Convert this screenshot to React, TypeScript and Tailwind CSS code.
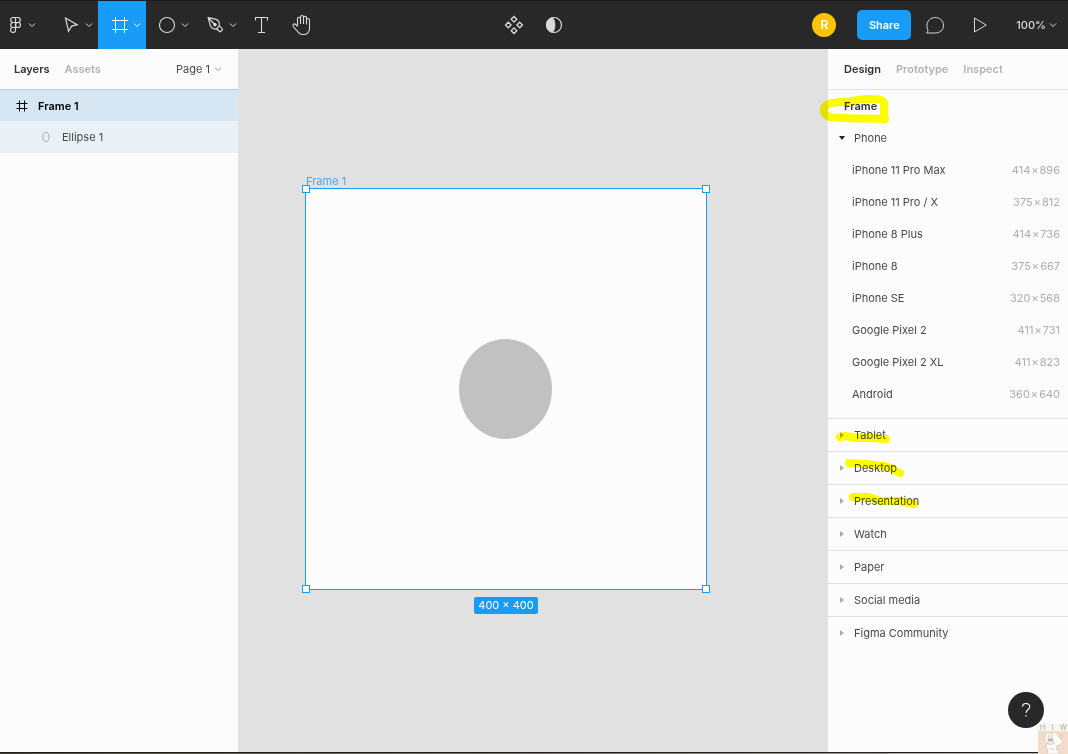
import React from "react";

type IconProps = { children: React.ReactNode; size?: string; box?: string };

function Icon({ children, size = "size-[18px]", box = "0 0 18 18" }: IconProps) {
  return (
    <svg viewBox={box} className={`${size} shrink-0`} fill="none" stroke="currentColor" aria-hidden="true">
      {children}
    </svg>
  );
}

function Chevron() {
  return (
    <Icon size="size-2" box="0 0 8 8">
      <path d="M1 2.5 4 5.5 7 2.5" />
    </Icon>
  );
}

function Tool({ label, active, first, children }: { label: string; active?: boolean; first?: boolean; children: React.ReactNode }) {
  return (
    <button
      aria-label={label}
      className={`flex h-full items-center gap-1 ${first ? "w-[50px] pl-[6px]" : "w-12 pl-[13px]"} ${active ? "bg-[#189cf8] text-white" : "text-[#d9d9d9]"}`}
    >
      {children}
      <Chevron />
    </button>
  );
}

function Toolbar() {
  return (
    <header className="flex h-[49px] shrink-0 border-t border-[#1c1c1c] bg-[#282828] text-[#d9d9d9]">
      <div className="flex flex-1">
        <Tool label="Main menu" first>
          <Icon>
            <path d="M9.5 1.5h-2.3a2.5 2.5 0 0 0 0 5h2.3zM9.5 1.5h2.3a2.5 2.5 0 0 1 0 5H9.5zM9.5 6.5H7.2a2.5 2.5 0 0 0 0 5h2.3zM9.5 11.5H7.2a2.5 2.5 0 1 0 2.3 2.5z" strokeWidth="1.2" />
            <circle cx="12" cy="9" r="2.5" strokeWidth="1.2" />
          </Icon>
        </Tool>
        <Tool label="Move">
          <Icon>
            <path d="M2.500 2 14.200 8.700 8.700 10.100 5.500 15.200z" strokeWidth="1.2" />
          </Icon>
        </Tool>
        <Tool label="Frame" active>
          <Icon>
            <path d="M4.5 1v16M13.5 1v16M1 4.5h16M1 13.5h16" />
          </Icon>
        </Tool>
        <Tool label="Shape">
          <Icon>
            <circle cx="8" cy="9" r="7.5" strokeWidth="1.1" />
          </Icon>
        </Tool>
        <Tool label="Pen">
          <Icon>
            <path d="M1.2 1.7 8.5 3.1c2.6.9 4.3 3.5 3.8 6.7L9.4 13C6.300 13.400 3.900 11.600 3.100 8.900zM1.500 2 7.300 8M12.300 9.800l2.800 2.800c.500.500.500 1 0 1.500l-1.200 1.200c-.500.500-1.100.500-1.600 0L9.500 12.800" strokeWidth="1.2" />
            <circle cx="8" cy="8.700" r="1.300" fill="currentColor" />
          </Icon>
        </Tool>
        <button aria-label="Text" className="flex h-full w-10 items-center justify-center">
          <Icon>
            <path d="M2.500 4.500v-3h12v3M8.500 1.500v15M5 16.500h7" strokeWidth="1.1" />
          </Icon>
        </button>
        <button aria-label="Hand" className="flex h-full w-10 items-center justify-center">
          <Icon size="size-[22px]" box="0 0 22 22">
            <path d="M6.500 12V4.800a1.500 1.500 0 0 1 3 0V10M9.500 10V3a1.500 1.500 0 0 1 3 0v7M12.500 10V3.800a1.500 1.500 0 0 1 3 0V10.500M15.500 10.500V6a1.500 1.500 0 0 1 3 0v8.500c0 3.500-2.500 6-5.700 6h-1c-2 0-3.500-.800-4.700-2.400L2.300 12.500c-.600-.900-.400-1.800.300-2.300s1.600-.300 2.200.400L6.500 12.500" strokeWidth="1.1" />
          </Icon>
        </button>
      </div>
      <div className="flex">
        <button aria-label="Create component" className="flex h-full w-10 items-center justify-center">
          <Icon size="size-5" box="0 0 20 20">
            <path d="M10 1.500 12.800 4.300 10 7.100 7.200 4.300zM10 12.900l2.800 2.800L10 18.500l-2.800-2.800zM4.300 7.200 7.100 10l-2.800 2.800L1.500 10zM15.700 7.200l2.800 2.800-2.800 2.800L12.900 10z" strokeWidth="1.300" />
          </Icon>
        </button>
        <button aria-label="Use as mask" className="flex h-full w-10 items-center justify-center">
          <Icon>
            <circle cx="9" cy="9" r="7.500" strokeWidth="1.200" />
            <path d="M7.500 1.700C10.600 5 10.600 13 7.500 16.300 4 15.500 1.500 12.600 1.500 9s2.500-6.500 6-7.300z" fill="currentColor" />
          </Icon>
        </button>
      </div>
      <div className="flex flex-1 items-center justify-end">
        <span className="mr-[21px] flex size-6 items-center justify-center rounded-full bg-[#ffc400] text-[12px] font-semibold text-white">R</span>
        <button className="h-[30px] w-[54px] rounded-[5px] bg-[#189cf8] text-[11px] font-semibold text-white">Share</button>
        <button aria-label="Comments" className="ml-[14px] flex">
          <Icon size="size-5" box="0 0 20 20">
            <path d="M1.500 18c1-.900 1.500-2 1.300-3.200A7.800 7.800 0 0 1 2 10.500C2 5.700 5.700 2.500 10.200 2.500s8.300 3.200 8.300 7.900-3.700 7.600-8.300 7.600z" />
          </Icon>
        </button>
        <button aria-label="Present" className="ml-[27px] flex">
          <Icon>
            <path d="M2.500 2v14L14.200 9z" />
          </Icon>
        </button>
        <button className="ml-[26px] flex items-center gap-[3px] pr-[11px] text-[11px] font-medium">
          100%
          <Chevron />
        </button>
      </div>
    </header>
  );
}

function LayersPanel() {
  return (
    <aside className="w-[238px] shrink-0 bg-[#fcfcfc]">
      <div className="flex h-10 items-center gap-[15px] px-[14px] font-semibold">
        <button className="text-[#333]">Layers</button>
        <button className="text-[#b3b3b3]">Assets</button>
        <button className="ml-auto flex items-center gap-1 pr-[2px] font-normal">
          Page 1
          <span className="flex text-[#999]"><Chevron /></span>
        </button>
      </div>
      <ul>
        <li className="flex h-8 items-center gap-[10px] border-t border-[#b9ccda] bg-[#d6e6f2] pl-4 font-semibold text-black">
          <Icon size="size-3" box="0 0 12 12">
            <path d="M3.500.500v11M8.500.500v11M.500 3.500h11M.500 8.500h11" />
          </Icon>
          Frame 1
        </li>
        <li className="flex h-8 items-center gap-[10px] bg-[#e9f0f6] pl-10">
          <span className="flex text-[#a8b0b6]">
            <Icon size="size-3" box="0 0 12 12">
              <ellipse cx="6" cy="6" rx="3" ry="4.500" />
            </Icon>
          </span>
          Ellipse 1
        </li>
      </ul>
    </aside>
  );
}

function Canvas() {
  const handle = "absolute size-2 border border-[#189cf8] bg-white";
  return (
    <main className="relative min-w-0 flex-1 overflow-hidden bg-[#e1e1e1]">
      <div className="absolute top-[139px] left-[67px] flex size-[402px] items-center justify-center border border-[#189cf8] bg-[#fcfcfc]">
        <span className="absolute bottom-full left-0 leading-4 text-[#45a8ef]">Frame 1</span>
        <div className="mr-px h-[100px] w-[93px] rounded-[50%] bg-[#c1c1c1]" />
        <i className={`${handle} -top-1 -left-1`} />
        <i className={`${handle} -top-1 -right-1`} />
        <i className={`${handle} -bottom-1 -left-1`} />
        <i className={`${handle} -right-1 -bottom-1`} />
        <span className="absolute top-full mt-2 rounded-[2px] bg-[#189cf8] px-1 leading-[17px] whitespace-nowrap text-white">
          400 × 400
        </span>
      </div>
    </main>
  );
}

const phones = [
  { name: "iPhone 11 Pro Max", width: 414, height: 896 },
  { name: "iPhone 11 Pro / X", width: 375, height: 812 },
  { name: "iPhone 8 Plus", width: 414, height: 736 },
  { name: "iPhone 8", width: 375, height: 667 },
  { name: "iPhone SE", width: 320, height: 568 },
  { name: "Google Pixel 2", width: 411, height: 731 },
  { name: "Google Pixel 2 XL", width: 411, height: 823 },
  { name: "Android", width: 360, height: 640 },
];

const groups: { name: string; mark?: string }[] = [
  { name: "Tablet", mark: "M12 18 18 17 28 19 44 19 58 20" },
  { name: "Desktop", mark: "M21 11 38 12 55 14 63 16 69 20 72 21" },
  { name: "Presentation", mark: "M25 12 41 12 52 16 70 16 82 18 86 19" },
  { name: "Watch" },
  { name: "Paper" },
  { name: "Social media" },
  { name: "Figma Community" },
];

function Marker({ d }: { d: string }) {
  return (
    <svg viewBox="0 0 120 32" className="pointer-events-none absolute top-0 left-0 h-8 w-[120px] overflow-visible mix-blend-multiply" fill="none" stroke="#ffff00" strokeWidth="8" strokeLinecap="round" strokeLinejoin="round" aria-hidden="true">
      <path d={d} />
    </svg>
  );
}

function DesignPanel() {
  return (
    <aside className="relative w-[240px] shrink-0 bg-[#fcfcfc]">
      <div className="flex h-[41px] items-center gap-[15px] border-b border-[#e1e1e1] px-4 font-semibold text-[#b3b3b3]">
        <button className="text-[#333]">Design</button>
        <button>Prototype</button>
        <button>Inspect</button>
      </div>
      <h2 className="relative flex h-8 items-center pl-4 font-semibold text-[#333]">
        Frame
        <Marker d="M56 14C56 9 49 9 40 9 30 9 25 12 15 12 4 12-4 14-4 20-4 28 5 28 16 28 30 29 44 28 57 29L56 25V14" />
      </h2>
      <button className="flex h-8 w-full items-center gap-[9px] pl-[11px]">
        <Icon size="size-[6px]" box="0 0 6 6">
          <path d="M0 1h6L3 5z" fill="#222" stroke="none" />
        </Icon>
        Phone
      </button>
      <ul className="pb-2">
        {phones.map((phone) => (
          <li key={phone.name} className="flex h-8 items-center justify-between pr-2 pl-6">
            {phone.name}
            <span className="text-[#adadad]">
              {phone.width}
              <span className="mx-px">×</span>
              {phone.height}
            </span>
          </li>
        ))}
      </ul>
      <ul>
        {groups.map((group) => (
          <li key={group.name} className="relative border-t border-[#e1e1e1]">
            <button className="flex h-8 w-full items-center gap-[9px] pl-[11px]">
              <Icon size="size-[6px]" box="0 0 6 6">
                <path d="M1 0v6l4-3z" fill="#aaa" stroke="none" />
              </Icon>
              {group.name}
            </button>
            {group.mark && <Marker d={group.mark} />}
          </li>
        ))}
      </ul>
    </aside>
  );
}

function Mascot() {
  return (
    <div className="absolute right-0 bottom-0 w-[30px]">
      <div className="flex justify-between bg-[#f7f5ec] pr-px pl-[2px] text-[7px] leading-[7px] text-[#aaa]">
        <span>H</span>
        <span>I</span>
        <span>W</span>
      </div>
      <svg viewBox="0 0 30 23" className="block h-[23px] w-[30px]" aria-hidden="true">
        <path d="M0 0h30v23H0z" fill="#f4dccb" />
        <path d="M7 4 10 1l3 2 4-2 3 3 3-1-1 5 3 2-3 4-4 1 1 4 3 2-2 2H9l1-4-2-3 1-4-3-3 2-3z" fill="#fbfaf6" stroke="#cfc8bf" strokeWidth=".7" />
        <ellipse cx="12.500" cy="9" rx="3" ry="1.800" fill="#bdb7b2" />
        <path d="M11 4v3M14 4v3M9 12q4 3 8-1M12 17l4 2M20 6l3-3" fill="none" stroke="#b8b1a8" strokeWidth=".8" />
        <path d="M20 3h5v3l-3 2z" fill="#eadba9" />
      </svg>
    </div>
  );
}

export default function App() {
  return (
    <div className="relative flex min-h-screen flex-col bg-[#fcfcfc] font-['Inter',sans-serif] text-[11px] leading-4 text-[#484848]">
      <Toolbar />
      <div className="flex flex-1">
        <LayersPanel />
        <Canvas />
        <DesignPanel />
      </div>
      <div className="h-[2px] border-t border-[#1e1e1e] bg-linear-to-r from-[#4b4b36] via-[#77736a] to-[#b8b8b8]" />
      <button aria-label="Help" className="absolute right-6 bottom-[26px] flex size-9 items-center justify-center rounded-full bg-[#282828] text-white">
        <Icon size="size-5" box="0 0 20 20">
          <path d="M6.500 6.800C6.500 4.800 8 3.500 10 3.500s3.700 1.300 3.700 3.300c0 3-3.700 3-3.700 6.200M10 15v1.500" strokeWidth="1.100" />
        </Icon>
      </button>
      <Mascot />
    </div>
  );
}
